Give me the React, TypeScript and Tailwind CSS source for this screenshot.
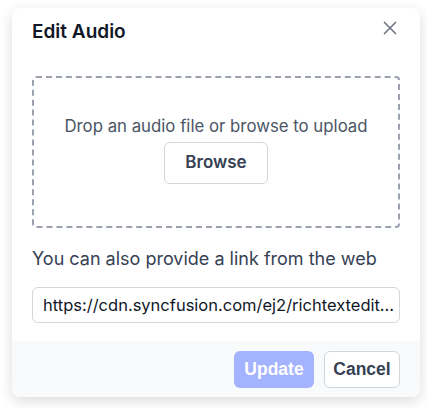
export default function App() {
  return (
    <div className="min-h-[408px] bg-white pt-2 pl-3" style={{ fontFamily: "Inter, 'Noto Sans', sans-serif" }}>
      {/* DIALOG */}
      <div className="w-[408px] h-[389px] rounded-lg bg-white shadow-[0_4px_14px_rgba(0,0,0,0.14)] flex flex-col overflow-hidden">
        {/* HEADER */}
        <div className="flex items-start justify-between px-5 pt-[10px] h-[68px]">
          <h2 className="text-[19px] leading-7 font-semibold text-gray-900">Edit Audio</h2>
          <button type="button" className="mt-[3px] mr-[3px] text-gray-500">
            <svg width="14" height="14" viewBox="0 0 14 14" fill="none" stroke="currentColor" strokeWidth="1.5">
              <path d="M1 1L13 13M13 1L1 13" />
            </svg>
          </button>
        </div>

        {/* BODY */}
        <div className="px-5 flex-1">
          <div className="h-[152px] border-2 border-dashed border-gray-400 rounded-[4px] flex flex-col items-center pt-[36px]">
            <p className="text-[16.8px] leading-6 text-gray-600">Drop an audio file or browse to upload</p>
            <button
              type="button"
              className="mt-1 w-[104px] h-[42px] rounded-md border border-gray-300 bg-white text-[17px] font-semibold text-gray-700"
            >
              Browse
            </button>
          </div>

          <p className="mt-[19px] text-[18px] leading-6 text-gray-700">You can also provide a link from the web</p>

          <input
            type="text"
            readOnly
            value="https://cdn.syncfusion.com/ej2/richtexteditor/resources/RTE-Audio.wav"
            className="mt-[16px] w-full h-[36px] rounded-md border border-gray-300 pl-[10px] pr-[2px] text-[16.5px] text-gray-900 outline-none text-ellipsis"
          />
        </div>

        {/* FOOTER */}
        <div className="h-[56px] bg-gray-50 flex items-center justify-end gap-[10px] px-5">
          <button
            type="button"
            className="w-[80px] h-[37px] rounded-md bg-indigo-300 text-white text-[17.5px] font-bold"
            style={{ fontFamily: "'Liberation Sans', Arial, sans-serif" }}
          >
            Update
          </button>
          <button
            type="button"
            className="w-[76px] h-[37px] rounded-md border border-gray-300 bg-white text-gray-700 text-[17.5px] font-bold"
            style={{ fontFamily: "'Liberation Sans', Arial, sans-serif" }}
          >
            Cancel
          </button>
        </div>
      </div>
    </div>
  );
}
